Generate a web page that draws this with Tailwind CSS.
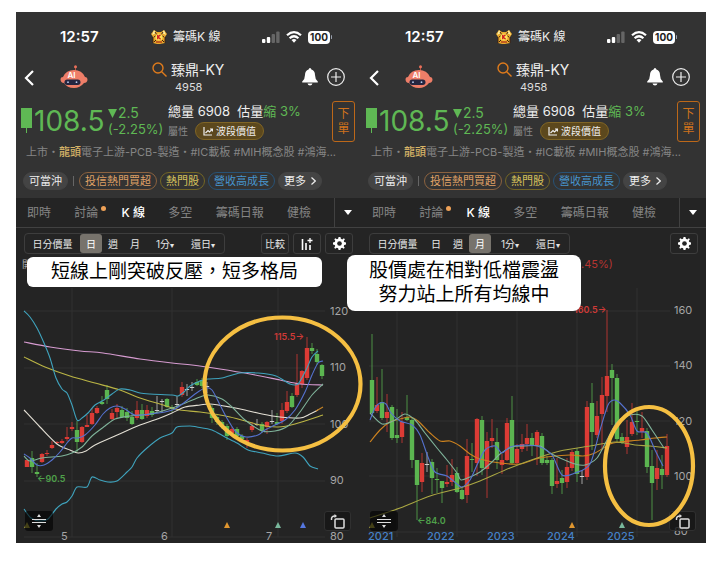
<!DOCTYPE html>
<html lang="zh-Hant">
<head>
<meta charset="utf-8">
<title>籌碼K線 臻鼎-KY</title>
<script src="https://cdn.jsdelivr.net/npm/@tailwindcss/browser@4"></script>
</head>
<body class="bg-white font-['Inter','Noto_Sans_CJK_TC',sans-serif]">
<main id="screens" class="grid grid-cols-2 pt-3 pl-4 pr-[14px] pb-4"></main>

<script>
const header = `
<header class="bg-[#333333]">
  <div class="flex h-[50px] items-center pl-11 pr-[29px] text-white">
    <span class="w-[91px] text-[15px] font-semibold">12:57</span>
    <div class="flex flex-1 items-center gap-[6px]">
      <svg class="size-4" viewBox="0 0 16 16"><path d="M3 1L6 3H10L13 1L16 5L14 8L14 14L9 15H6L2 14L2 8L0 5Z" fill="#e9a92c"/><path d="M3 1L5 4L1 6ZM13 1L11 4L15 6Z" fill="#fff0a0"/><path d="M4 3L6 6L3 8M12 3L10 6L13 8M3 13L5 11M13 13L11 11M2 8V14M14 8V14" stroke="#40200f" fill="none"/><circle cx="8" cy="8" r="3.6" fill="#ffe25a"/><path d="M6.7 5.7V10.3M9.5 5.7L7 8L9.6 10.3" stroke="#d02020" stroke-width="1.3" fill="none"/><path d="M5 13H11" stroke="#b6451c" stroke-width="1.5"/></svg>
      <span class="text-[12px] text-[#eee]">籌碼K 線</span>
    </div>
    <div class="flex items-center gap-[6px]">
      <svg class="h-3 w-[18px]" viewBox="0 0 18 12"><rect y="8" width="3.4" height="4" rx="1" fill="#fff"/><rect x="4.8" y="6" width="3.4" height="6" rx="1" fill="#fff"/><rect x="9.6" y="3" width="3.4" height="9" rx="1" fill="#666"/><rect x="14.2" y="0.5" width="3.4" height="11.5" rx="1" fill="#666"/></svg>
      <svg class="h-3 w-4" viewBox="0 0 16 12" fill="none" stroke="#fff" stroke-width="2.2"><path d="M1 4.3Q8-2 15 4.3M3.6 7.2Q8 3.3 12.4 7.2"/><path d="M5.5 9Q8 7 10.5 9L8 11.8Z" fill="#fff" stroke="none"/></svg>
      <div class="flex items-center gap-px"><span class="flex h-[13px] w-[22px] items-center justify-center rounded bg-white text-[10px] font-bold text-[#222]">100</span><span class="h-1 w-px rounded bg-gray-400"></span></div>
    </div>
  </div>
  <div class="flex h-[38px] items-start pl-2 pr-4">
    <button aria-label="返回" class="w-9 pt-2"><svg class="h-4 w-[10px]" viewBox="0 0 10 16" fill="none" stroke="#fff" stroke-width="2.2"><path d="M9 1L2 8L9 15"/></svg></button>
    <button aria-label="AI 助理" class="w-[92px] pt-[3px]"><svg class="h-6 w-7" viewBox="0 0 28 24"><path d="M15.5 8V2" stroke="#b9503f" stroke-width="1"/><circle cx="15.5" cy="1.8" r="1.5" fill="#e9705a"/><path d="M0.5 14Q0.5 12 3 12Q6 5 14 5Q22 5 25 12Q27.5 12 27.5 15Q27 18 24 18Q20 23 14 23Q7 23 4 18Q0.5 18 0.5 14Z" fill="#ee7e68"/><rect x="4.5" y="14.5" width="16" height="5.5" rx="2.7" fill="#252640"/><circle cx="8" cy="17.2" r=".9" fill="#bce"/><circle cx="16.5" cy="17.2" r=".9" fill="#bce"/><text x="7.5" y="13" font-size="8" font-weight="600" fill="#fff" font-family="Inter">AI</text></svg></button>
    <div class="flex flex-1 gap-1">
      <svg class="size-[15px]" viewBox="0 0 15 15" fill="none" stroke="#df7b1c" stroke-width="1.4"><circle cx="6" cy="6" r="5"/><path d="M9.7 9.7L14.5 14.5"/></svg>
      <div><h1 class="text-[14px] leading-4 text-[#eee]">臻鼎-KY</h1><p class="pl-1 text-[11px] leading-[18px] text-[#ddd]">4958</p></div>
    </div>
    <div class="flex gap-[9px] pt-[6px]">
      <button aria-label="通知"><svg class="h-[18px] w-4" viewBox="0 0 16 18" fill="#fff"><path d="M8 0Q9.2 0 9.4 1.5Q13 2.5 13 7Q13 11 15.8 13.5V14.5H.2V13.5Q3 11 3 7Q3 2.5 6.6 1.5Q6.8 0 8 0ZM5.5 15.5H10.5Q10 17.5 8 17.5Q6 17.5 5.5 15.5Z"/></svg></button>
      <button aria-label="加入自選"><svg class="size-[18px]" viewBox="0 0 18 18" fill="none" stroke="#eee" stroke-width="1.2"><circle cx="9" cy="9" r="8.3"/><path d="M9 4V14M4 9H14"/></svg></button>
    </div>
  </div>
  <div class="flex h-[42px] items-center pl-[5px] pr-[6px] text-[#5fb854]">
    <svg class="mr-[2px] h-[26px] w-[11px]" viewBox="0 0 11 26" fill="#5fb854"><rect width="11" height="20"/><rect x="5" y="20" width="1" height="5"/></svg>
    <span class="w-[74px] text-[28px]">108.5</span>
    <div class="w-[60px] text-[14px] leading-4"><p class="flex items-center gap-px"><svg class="h-[9px] w-[9px]" viewBox="0 0 9 9"><path d="M0 0H9L4.5 9Z" fill="#5fb854"/></svg>2.5</p><p class="text-[13px]">(-2.25%)</p></div>
    <div class="flex flex-1 flex-col gap-[2px]">
      <p class="text-[13px] leading-[18px] whitespace-nowrap"><span class="text-[#eee]">總量 6908&nbsp; 估量</span>縮 3%</p>
      <div class="flex items-center gap-[7px]"><span class="text-[10px] text-[#888]">屬性</span>
        <a href="#" class="flex h-[18px] items-center gap-[3px] rounded-full border border-[#806525] bg-[#5c481d] px-[7px] text-[10px] text-[#eee]"><svg class="h-[9px] w-[10px]" viewBox="0 0 10 9" fill="none" stroke="#eee" stroke-width="1.2"><path d="M1 0V8H9M2.5 6L5 3.5L6.5 5L9.5 2M7 2H9.5V4.5"/></svg>波段價值</a></div>
    </div>
    <button class="flex h-[41px] w-[23px] items-center justify-center rounded-[3px] border border-[#bd6819] text-[12px] leading-[15px] text-[#cf721c]">下<br>單</button>
  </div>
  <p class="h-[30px] pl-[10px] text-[11px] leading-5 whitespace-nowrap text-[#858585]">上市・<b class="font-medium text-[#d8b568]">龍頭</b>電子上游-PCB-製造・#IC載板 #MIH概念股 #鴻海...</p>
  <div class="flex h-[26px] items-start gap-[3px] pl-[7px] text-[11px] leading-4 whitespace-nowrap">
    <span class="rounded-full border border-[#444] bg-[#444] px-[5px] text-[#eee]">可當沖</span>
    <span class="mx-[2px] mt-1 h-[10px] w-px bg-[#666]"></span>
    <a href="#" class="rounded-full border border-[#8b623f] px-[5px] text-[#dfa066]">投信熱門買超</a>
    <a href="#" class="rounded-full border border-[#736625] px-[5px] text-[#d8c45c]">熱門股</a>
    <a href="#" class="rounded-full border border-[#285276] px-[5px] text-[#4794cc]">營收高成長</a>
    <button class="flex items-center gap-[5px] rounded-full border border-[#444] bg-[#444] px-[5px] text-[#eee]">更多<svg class="h-2 w-[5px]" viewBox="0 0 5 8" fill="none" stroke="#eee" stroke-width="1.2"><path d="M.5 .5L4.3 4L.5 7.5"/></svg></button>
  </div>
</header>
<nav class="flex h-[30px] items-stretch border-b border-[#414141] bg-[#242424] text-[12px] whitespace-nowrap text-[#858585]">
  <div class="flex flex-1 items-center justify-between pl-[11px] pr-[23px]">
    <a href="#">即時</a>
    <a href="#" class="relative">討論<span class="absolute top-[2px] -right-[8px] size-[5px] rounded-full bg-[#eea157]"></span></a>
    <a href="#" class="font-medium text-white">K 線</a><a href="#">多空</a><a href="#">籌碼日報</a><a href="#">健檢</a>
  </div>
  <button aria-label="更多分頁" class="flex w-[27px] items-center justify-center border-l border-[#414141]"><svg class="h-[5px] w-2" viewBox="0 0 8 5"><path d="M0 0H8L4 5Z" fill="#fff"/></svg></button>
</nav>`;

const gear = `<button aria-label="設定" class="flex h-[21px] w-7 items-center justify-center rounded-[3px] border border-[#3d3d3d]"><svg class="size-[13px]" viewBox="0 0 14 14"><path d="M6 0H8L8.5 2L10 2.6L11.7 1.4L12.8 2.5L11.6 4.2L12.1 5.5L14 6V8L12.1 8.5L11.5 10L12.6 11.6L11.5 12.7L9.8 11.6L8.5 12.1L8 14H6L5.5 12.1L4.1 11.5L2.4 12.6L1.3 11.5L2.4 9.8L1.9 8.5L0 8V6L1.9 5.5L2.5 4.1L1.4 2.4L2.5 1.3L4.2 2.4L5.5 1.9Z" fill="#fff"/><circle cx="7" cy="7" r="2.5" fill="#242424"/></svg></button>`;
const extras = `<button class="h-[21px] w-7 rounded-[3px] border border-[#3d3d3d] text-[10px] leading-none">比較</button>
<button aria-label="指標" class="flex h-[21px] w-7 items-center justify-center rounded-[3px] border border-[#3d3d3d]"><svg class="h-3 w-3" viewBox="0 0 12 12" stroke="#fff" stroke-width="1.6"><path d="M1.5 1V12M5 5V12M9 7V12"/><path d="M9 0V5M6.5 2.5H11.5" stroke-width="1.3"/></svg></button>`;

function toolbar(active, more) {
  const on = 'w-[22px] self-stretch rounded-[3px] bg-[#77736c] text-white';
  const off = 'w-[22px]';
  return `<div class="flex h-[29px] items-center justify-between bg-[#242424] pt-[2px] pl-2 pr-2 text-[10px] whitespace-nowrap text-[#e5e5e5]">
    <div class="flex h-[21px] w-[201px] items-center rounded border border-[#3d3d3d] leading-none">
      <button class="w-[55px]">日分價量</button>
      ${['日', '週', '月'].map(t => `<button class="${t === active ? on : off}">${t}</button>`).join('')}
      <button class="w-[38px] text-center">1分<span class="text-[8px]">▾</span></button><button class="w-[38px] text-center">還日<span class="text-[8px]">▾</span></button>
    </div>
    <div class="flex gap-1">${more ? extras : ''}${gear}</div>
  </div>`;
}

// Smooth path through a list of x,y pairs
function curve(s) {
  const p = s.split(' ').map(v => v.split(',').map(Number));
  let d = `M${p[0]}`;
  for (let i = 0; i < p.length - 1; i++) {
    const a = p[i - 1] || p[i], b = p[i], c = p[i + 1], e = p[i + 2] || c;
    d += `C${b[0] + (c[0] - a[0]) / 7},${b[1] + (c[1] - a[1]) / 7} ${c[0] - (e[0] - b[0]) / 7},${c[1] - (e[1] - b[1]) / 7} ${c}`;
  }
  return d;
}
const tone = { r: '#dc3b35', g: '#5bb550', w: '#cccccc' };
// Each entry: tone, body top, body bottom, high, low
function candles(s, x0) {
  return s.trim().split(/\s+/).map((v, i) => {
    const k = v[0], [t, b, h, l] = v.slice(1).split(',').map(Number), x = x0 + i * 5, c = tone[k];
    return `<rect x="${x - .5}" y="${h}" width="1" height="${l - h}" fill="${c}" opacity=".75"/><rect x="${x - 2.2}" y="${t}" width="4.4" height="${Math.max(1, b - t)}" fill="${c}"/>`;
  }).join('');
}
function chart(o) {
  const x0 = o.x;
  return `<svg class="block h-auto w-full" viewBox="${x0} 257 345 286" font-family="Inter, 'Noto Sans CJK TC', sans-serif">
    <rect x="${x0}" y="257" width="345" height="286" fill="#242424"/>
    ${o.h.map(y => `<path d="M${x0 + 8} ${y}H${x0 + 309}" stroke="#303030"/>`).join('')}
    ${o.v.map(x => `<path d="M${x} 288V537" stroke="#303030"/>`).join('')}
    ${candles(o.c, x0 + 11)}
    ${o.lines.map(l => `<path d="${curve(l[1])}" fill="none" stroke="${l[0]}" stroke-width="1.1"/>`).join('')}
    ${o.tri.map(t => `<path d="M${t[0] - 3} 528L${t[0]} 522L${t[0] + 3} 528Z" fill="${t[1]}"/>`).join('')}
    ${o.labels.map(t => `<text x="${t[0]}" y="${t[1]}" fill="${t[3]}" font-size="${t[4] || 11}" font-weight="${t[5] || 400}">${t[2]}</text>`).join('')}
  </svg>
  <button aria-label="調整高度" class="absolute bottom-3 left-[9px] flex h-5 w-7 items-center justify-center rounded-[3px] bg-black/60"><svg class="h-[14px] w-[14px]" viewBox="0 0 14 14"><path d="M0 5.5H14M0 8.5H14" stroke="#ddd" stroke-width="1.2"/><path d="M5 3L7 0L9 3ZM5 11L7 14L9 11Z" fill="#ddd"/></svg></button>
  <button aria-label="旋轉螢幕" class="absolute right-[10px] bottom-3 flex h-5 w-[27px] items-center justify-center rounded-[3px] border border-[#303030] bg-[#151515]/80"><svg class="h-[15px] w-[15px]" viewBox="0 0 15 15" fill="none" stroke="#ddd" stroke-width="1.5"><rect x="5" y="5" width="9" height="9" rx="1"/><path d="M1.5 6Q1 2 5 2"/><path d="M4.5 0L7 2L4.5 4Z" fill="#ddd" stroke="none"/></svg></button>
  <svg class="pointer-events-none absolute inset-0 z-10 h-full w-full overflow-visible" viewBox="${x0} 257 345 286"><ellipse cx="${o.ring[0]}" cy="${o.ring[1]}" rx="${o.ring[2]}" ry="${o.ring[3]}" fill="none" stroke="#f5bf42" stroke-width="4.2"/></svg>`;
}

const daily = {
  x: 16, h: [311, 368, 424, 481, 537], v: [72, 172, 278], ring: [282.5, 384, 78, 66.5],
  c: `r460,467,460,467 g458,467,451,473 g472,474,463,477 r454,462,453,463 r453,454,450,456 r445,448,441,449 r442,443,441,444 r441,443,439,444 r437,439,427,441 r427,429,422,431
  g430,442,421,452 r427,442,426,443 r425,427,415,427 r413,424,408,425 r408,413,406,414 g402,404,396,405 g390,399,385,404 r413,419,409,420 r408,412,404,418 g410,417,406,418
  g412,418,408,421 g417,424,411,425 r410,418,401,420 g410,419,404,420 r410,416,405,418 g411,415,407,417 w410,411,396,412 w401,402,399,413 g399,407,398,408 g407,409,405,412
  w404,405,396,408 r387,395,382,397 w389,390,384,396 w387,388,382,391 g382,385,379,386 g380,386,378,388 w386,387,382,393 g408,418,405,423 g417,422,415,425 g422,427,420,429
  g426,436,424,440 r429,433,427,435 g429,436,427,438 g436,439,434,440 r440,443,438,448 r426,430,422,432 w424,425,419,426 g424,431,422,433 r422,427,421,434 w421,422,410,424
  g422,424,413,425 r410,421,403,424 r402,411,391,413 g396,407,393,408 r383,395,354,397 r371,384,370,388 r348,378,337,380 g348,351,343,354 g354,362,349,365 g365,376,364,379`,
  lines: [
    ['#d69bd0', '24,342 50,347 80,351 103,353 140,359 172,363 192,365 220,369 250,374 280,380 300,384 323,385'],
    ['#bbb545', '24,357 45,367 70,376 95,383 120,390 140,398 160,404 180,410 200,412 230,417 260,425 278,427 295,424 323,415'],
    ['#e4e0d5', '24,410 40,427 57,444 70,450 78,453 86,451 95,445 115,436 140,425 160,418 172,413 185,407 200,405 210,404 230,407 245,410 262,414 280,417 300,418 310,414 318,410'],
    ['#c98627', '316,411 323,407'],
    ['#7fb39a', '24,456 30,461 42,458 62,456 72,453 82,447 92,436 105,426 115,419 130,416 150,414 172,408 190,401 200,397 208,395 222,399 232,407 245,420 262,431 275,431 288,426 300,412 312,395 323,384'],
    ['#5572cf', '24,454 30,458 37,465 44,465 52,460 60,452 67,443 72,438 78,438 85,435 95,425 103,414 110,408 117,406 125,409 135,415 150,414 165,412 175,409 185,402 195,394 205,388 212,390 220,405 228,420 236,432 246,437 258,435 265,430 275,425 285,420 295,410 305,392 312,375 318,363 323,361'],
    ['#3fa3bd', '24,311 30,317 37,328 44,343 50,358 56,378 62,389 67,393 72,405 77,420 82,418 88,413 95,405 104,400 112,394 120,389 130,390 140,393 150,394 172,395 178,396 184,392 190,386 200,381 208,379 222,378 240,373 258,373 276,376 290,384 298,384 306,370 312,357 318,351'],
    ['#3fa3bd', '24,509 31,518 40,521 48,519 56,509 62,504 67,502 72,496 77,487 87,487 92,477 100,480 108,482 117,481 127,472 132,467 137,458 147,448 160,438 172,433 177,427 190,426 197,427 212,430 225,437 237,443 248,450 262,453 278,456 295,453 303,457 310,466 318,469'],
  ],
  tri: [[27, '#a8a03a'], [227, '#e0962f'], [278, '#79b89c'], [303, '#5577e0']],
  labels: [[22, 268, '開', '#aaa', 10], [330, 315, '120', '#a5a5a5'], [330, 371, '110', '#a5a5a5'], [330, 428, '100', '#a5a5a5'], [330, 484, '90', '#a5a5a5'], [330, 540, '80', '#a5a5a5'],
    [61, 540, '5', '#a5a5a5'], [161, 540, '6', '#a5a5a5'], [266, 540, '7', '#a5a5a5'], [274, 340, '115.5→', '#cf3a37', 9, 600], [37, 482, '←90.5', '#4fa04a', 9, 600]],
};
const monthly = {
  x: 361, h: [311, 366, 421, 476, 532], v: [397, 457, 517, 577, 637], ring: [649, 466, 44, 59],
  c: `g380,413,334,414 r405,411,377,413 g402,418,369,420 r412,418,394,432 g407,438,405,440 g435,438,409,443 r422,437,412,443 g417,420,395,421 g420,460,418,468 g460,485,460,520
  r463,482,453,492 w464,465,452,472 g462,478,459,494 g479,480,468,493 g481,488,481,503 r482,484,465,487 r475,482,459,486 g473,492,467,493 g490,499,487,500 r456,495,439,503
  g459,460,443,472 r419,463,418,476 g420,468,416,475 r441,469,432,498 r438,441,419,448 g442,460,428,469 r460,465,454,474 r423,460,418,461 g420,463,396,464 r449,463,444,464
  r444,449,434,452 r438,444,424,451 g438,445,433,456 r432,445,430,465 g436,463,433,465 g460,463,456,465 g460,486,458,494 r481,484,458,488 g478,483,470,494 r467,482,458,488
  r452,468,450,471 g451,474,448,482 w476,477,470,484 r407,477,401,480 g403,432,383,450 r416,435,401,438 r395,414,377,450 r376,396,310,412 g370,378,364,425 g378,439,374,442
  g437,443,433,444 r437,447,420,454 r422,434,403,436 g421,422,410,435 r428,432,412,438 g431,467,428,473 g466,483,450,520 r468,479,450,490 g469,475,455,489 r446,475,434,477`,
  lines: [
    ['#cc821f', '370,442 380,430 390,422 400,419 410,417 418,421 430,433 440,441 450,441 460,446 470,454 480,459 500,463 520,464 540,458 570,455 583,456 595,453 610,444 620,442 640,440 655,438 667,437'],
    ['#aaa743', '370,518 400,508 430,496 460,488 480,481 510,468 540,457 560,451 590,446 615,442 635,445 650,446 667,448'],
    ['#7fb39a', '370,413 382,424 395,420 405,414 415,420 425,433 437,448 447,460 457,473 461,480 470,477 480,472 492,462 500,454 512,447 525,446 540,446 550,453 560,458 575,464 585,465 597,458 607,440 617,422 630,415 642,416 652,430 664,448'],
    ['#5572cf', '370,420 375,408 380,403 386,404 391,413 400,421 412,425 420,435 428,457 435,472 447,476 457,484 462,487 470,480 477,465 485,450 495,446 502,453 510,447 525,445 540,447 552,455 562,475 575,473 590,464 600,430 608,405 614,400 620,403 630,415 637,431 647,433 655,450 663,466'],
  ],
  tri: [[372, '#a8a03a'], [572, '#e0962f'], [622, '#79b89c']],
  labels: [[581, 268, '.45%)', '#b63431', 11], [674, 314, '160', '#a5a5a5'], [674, 369, '140', '#a5a5a5'], [674, 425, '120', '#a5a5a5'], [674, 480, '100', '#a5a5a5'], [674, 535, '80', '#a5a5a5'],
    [368, 540, '2021', '#4581c7', 11, 500], [427, 540, '2022', '#4581c7', 11, 500], [487, 540, '2023', '#4581c7', 11, 500], [547, 540, '2024', '#4581c7', 11, 500], [607, 540, '2025', '#4581c7', 11, 500],
    [574, 313, '160.5→', '#cf3a37', 9, 600], [417, 524, '←84.0', '#4fa04a', 9, 600]],
};

document.getElementById('screens').innerHTML = `
<section>${header}${toolbar('日', true)}
  <div class="relative">${chart(daily)}
    <p class="absolute top-0 right-[39px] left-[11px] z-10 rounded-md bg-white text-center text-[19px] leading-[30px] whitespace-nowrap text-black">短線上剛突破反壓，短多格局</p></div>
</section>
<section>${header}${toolbar('月', false)}
  <div class="relative">${chart(monthly)}
    <p class="absolute -top-[2px] -left-[14px] z-10 rounded-lg bg-white px-[22px] py-1 text-center text-[19px] leading-6 whitespace-nowrap text-black">股價處在相對低檔震盪<br>努力站上所有均線中</p></div>
</section>`;
</script>
</body>
</html>
